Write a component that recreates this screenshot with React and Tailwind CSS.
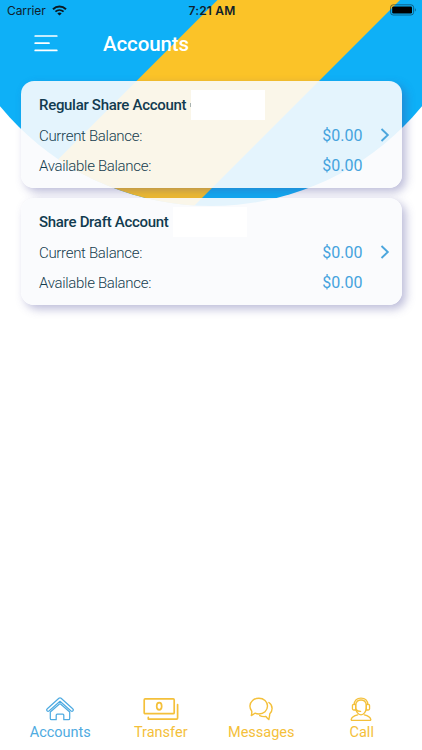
const accounts = [
  { name: 'Regular Share Account', current: '$0.00', available: '$0.00', peek: true },
  { name: 'Share Draft Account', current: '$0.00', available: '$0.00', peek: false },
];

const HomeIcon = () => (
  <svg width="28" height="24" viewBox="0 0 28 24" fill="none" stroke="currentColor" strokeWidth="1.25" strokeLinejoin="round" strokeLinecap="round">
    <path d="M12.900 1.300c.6-.5 1.600-.5 2.200 0l11.600 10.500c.6.5.7 1.400.2 2-.5.6-1.300.6-1.900.2L14 4.300 3 14c-.6.4-1.400.4-1.900-.2-.5-.6-.4-1.500.2-2z" />
    <path d="M4.300 15l9.100-8c.4-.3.800-.3 1.200 0L23.700 15v6.400c0 .8-.5 1.300-1.300 1.300h-4.600v-4.500c0-.6-.4-1-1-1h-5.600c-.6 0-1 .4-1 1v4.500H5.600c-.8 0-1.300-.5-1.300-1.300z" />
  </svg>
);

const TransferIcon = () => (
  <svg width="36" height="24" viewBox="0 0 36 24" fill="none" stroke="currentColor" strokeWidth="1.7" strokeLinejoin="round" strokeLinecap="round">
    <rect x="1.200" y="1.900" width="30" height="14.800" rx="1" />
    <ellipse cx="16.200" cy="9.300" rx="2.500" ry="3.600" />
    <path d="M34.600 7.500v13.600c0 .6-.4 1-1 1H5.300v-1.800" />
  </svg>
);

const MessagesIcon = () => (
  <svg width="26" height="24" viewBox="0 0 26 24" fill="none" stroke="currentColor" strokeWidth="1.4" strokeLinejoin="round" strokeLinecap="round">
    <path d="M10.900 1.200c4.900 0 8.600 3.500 8.600 7.900s-3.700 7.900-8.600 7.900c-1.500 0-2.800-.3-4-.8-1.200.9-2.300 1.700-3.600 2.300.4-1.500.6-2.900.5-4.300-1.200-1.400-1.900-3.100-1.900-5.100 0-4.400 4.100-7.900 9-7.900z" />
    <path d="M20.900 5.500c2 1.300 3.200 3.500 3.200 5.900 0 2.100-.9 3.900-2.300 5.300-.1 1.900-.5 3.900-1 5.900-1.200-1.200-2.100-2.200-2.900-3.100-2.200.4-4.400 0-6.200-.9" />
  </svg>
);

const CallIcon = () => (
  <svg className="-ml-[1px] mt-[1px]" width="24" height="25" viewBox="0 0 24 26" fill="none" stroke="currentColor" strokeWidth="1.35" strokeLinejoin="round" strokeLinecap="round">
    <path d="M4.800 8C5.200 3.800 8.100 1.200 12 1.200S18.800 3.800 19.200 8" />
    <path d="M6.500 8c.5-3 2.600-4.900 5.500-4.900S17 5 17.500 8v2.800c0 4.200-2.500 7.700-5.500 7.700s-5.500-3.500-5.500-7.700z" />
    <path d="M6.500 7.700H4.300c-.7 0-1.200.5-1.200 1.200v3.400c0 .7.5 1.200 1.200 1.200h2.200zM17.500 7.700h2.200c.7 0 1.200.5 1.200 1.200v3.400c0 .7-.5 1.200-1.200 1.200h-2.200z" />
    <path d="M6.800 13c1 1.300 2.600 2 4.800 2" />
    <path d="M8.500 18.700c-3.800.9-6.100 2.100-6.700 4.700-.1.500.2.900.7.900h19c.5 0 .8-.4.700-.9-.6-2.600-2.900-3.800-6.700-4.700" />
  </svg>
);

const tabs = [
  { label: 'Accounts', Icon: HomeIcon, color: 'text-[#4fabe1]' },
  { label: 'Transfer', Icon: TransferIcon, color: 'text-[#f4c03a]' },
  { label: 'Messages', Icon: MessagesIcon, color: 'text-[#f4c03a]' },
  { label: 'Call', Icon: CallIcon, color: 'text-[#f4c03a]' },
];

const Backdrop = () => (
  <svg className="absolute top-0 left-0" width="422" height="210" viewBox="0 0 422 210">
    <defs>
      <clipPath id="dome">
        <circle cx="211" cy="-66.500" r="272.600" />
      </clipPath>
    </defs>
    <g clipPath="url(#dome)">
      <rect width="422" height="210" fill="#0eb0f7" />
      <path d="M217.500 0H400L190 210H7.500z" fill="#fbc328" />
    </g>
  </svg>
);

const StatusBar = () => (
  <div className="grid grid-cols-3 items-center h-[22px] pl-[7px] pr-[5px] text-[12px] text-[#10202b] font-['Inter',sans-serif]">
    <div className="flex items-center gap-[6px]">
      <span className="tracking-[-0.1px]">Carrier</span>
      <svg className="-mt-[2px]" width="15" height="11" viewBox="0 0 15 11" fill="none" stroke="#0b1820">
        <path d="M1 4.200c3.800-3.600 9.200-3.600 13 0" strokeWidth="2" />
        <path d="M3.400 6.700c2.400-2.200 5.800-2.200 8.200 0" strokeWidth="1.800" />
        <path d="M7.500 10.600L5.300 8.400c1.300-1.100 3.100-1.100 4.400 0z" fill="#0b1820" stroke="none" />
      </svg>
    </div>
    <span className="text-center font-semibold tracking-[0.15px]">7:21 AM</span>
    <svg className="justify-self-end -mt-[2px]" width="27" height="12" viewBox="0 0 27 12">
      <rect x="0.600" y="0.800" width="23" height="10.200" rx="2.600" fill="none" stroke="#0b3145" strokeOpacity="0.6" />
      <rect x="2.200" y="2.400" width="19.800" height="7" rx="1.200" fill="#000" />
      <path d="M24.900 4.200c1.200.3 1.200 3.100 0 3.400z" fill="#0b3145" fillOpacity="0.6" />
    </svg>
  </div>
);

const BalanceRow = ({ label, amount }) => (
  <div className="flex justify-between items-center h-[30px]">
    <span className="text-[15px] font-light tracking-[-0.31px] text-[#143c4e]">{label}</span>
    <span className="text-[16px] text-[#45a3dd]">{amount}</span>
  </div>
);

const AccountCard = ({ account }) => (
  <div className="relative flex h-[107.5px] rounded-[13px] bg-[#fafbfd]/91 pl-[18.5px] pr-[11px] shadow-[4px_4px_10px_rgba(70,70,150,0.36)]">
    <div className="w-[323.5px] pt-[9px]">
      <div className="flex items-center h-[31px]">
        <span className="text-[15px] font-medium tracking-[-0.3px] text-[#123b50] whitespace-nowrap">{account.name}</span>
        {account.peek && <span className="ml-[4px] -mr-[5px] w-px h-[4px] bg-[#a9b3b0]" />}
        <span className="ml-[4.500px] w-[74px] h-[30px] bg-white shrink-0" />
      </div>
      <div className="pt-[0.500px]">
        <BalanceRow label="Current Balance:" amount={account.current} />
        <BalanceRow label="Available Balance:" amount={account.available} />
      </div>
    </div>
    <svg className="ml-[17px] mt-[47px] shrink-0" width="10" height="14" viewBox="0 0 10 14" fill="none" stroke="#4ba6dd" strokeWidth="1.900">
      <path d="M1.500 1l6.300 6-6.300 6" />
    </svg>
  </div>
);

const App = () => {
  return (
    <div className="relative w-[422px] h-[750px] overflow-hidden bg-white font-['Roboto',sans-serif]">
      <Backdrop />

      <div className="relative flex flex-col h-full">
        <StatusBar />

        {/* Header */}
        <header className="flex items-center h-[58.5px] pl-[34px] pb-[14px]">
          <button className="w-[24px] -mt-[3px]">
            <svg width="24" height="18" viewBox="0 0 24 18" fill="none" stroke="#fff" strokeWidth="1.700" strokeLinecap="round">
              <path d="M1.200 2h21.600M1.200 9.200h13.800M1.200 16.400h21.600" />
            </svg>
          </button>
          <h1 className="ml-[45px] mt-[1px] text-[20.500px] font-medium tracking-[-0.1px] text-white">Accounts</h1>
        </header>

        {/* Accounts */}
        <main className="flex flex-col flex-1 gap-[9.5px] px-[20.5px]">
          {accounts.map((account) => (
            <AccountCard key={account.name} account={account} />
          ))}
        </main>

        {/* Bottom tabs */}
        <nav className="grid grid-cols-4 h-[55.5px] px-[10px]">
          {tabs.map(({ label, Icon, color }) => (
            <button key={label} className={`flex flex-col items-center ${color}`}>
              <span className="flex items-center h-[28px]">
                <Icon />
              </span>
              <span className="text-[14.500px] leading-[20px]">{label}</span>
            </button>
          ))}
        </nav>
      </div>
    </div>
  );
};

export default App;
